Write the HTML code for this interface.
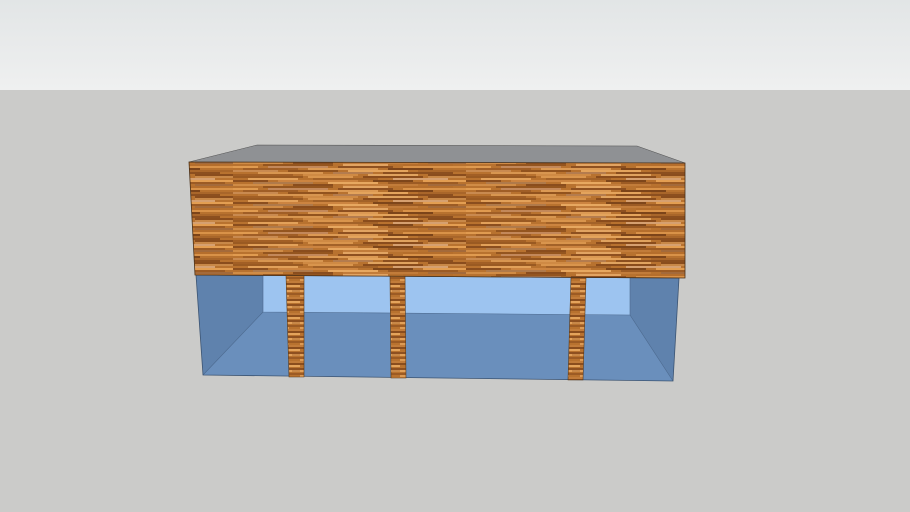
<!DOCTYPE html>
<html><head><meta charset="utf-8"><style>html,body{margin:0;padding:0;width:910px;height:512px;overflow:hidden;background:#cbcbc9}</style></head>
<body>
<svg width="910" height="512" viewBox="0 0 910 512" xmlns="http://www.w3.org/2000/svg">
<defs>
<linearGradient id="sky" x1="0" y1="0" x2="0" y2="1">
<stop offset="0" stop-color="#e2e5e6"/><stop offset="1" stop-color="#eff0f0"/>
</linearGradient>
<pattern id="wood" patternUnits="userSpaceOnUse" width="233" height="22">
<rect width="233" height="22" fill="#b8722f"/>
<rect x="0" y="0" width="70" height="2" fill="#9a5a22"/><rect x="75" y="0" width="45" height="2" fill="#d9954d"/><rect x="130" y="0" width="60" height="2" fill="#8a4c1c"/><rect x="195" y="0" width="38" height="2" fill="#c88848"/>
<rect x="15" y="2" width="50" height="2" fill="#e2a15a"/><rect x="80" y="2" width="65" height="2" fill="#a36228"/><rect x="160" y="2" width="55" height="2" fill="#d6a070"/>
<rect x="0" y="4" width="35" height="2" fill="#8b4e1e"/><rect x="45" y="4" width="80" height="2" fill="#cc8440"/><rect x="140" y="4" width="40" height="2" fill="#7e461a"/><rect x="190" y="4" width="43" height="2" fill="#e39e52"/>
<rect x="20" y="6" width="60" height="2" fill="#b07a4a"/><rect x="95" y="6" width="50" height="2" fill="#e7a860"/><rect x="155" y="6" width="70" height="2" fill="#9c5b24"/>
<rect x="0" y="8" width="50" height="2" fill="#d08c46"/><rect x="60" y="8" width="40" height="2" fill="#8a4d1d"/><rect x="110" y="8" width="75" height="2" fill="#c27c3a"/><rect x="195" y="8" width="38" height="2" fill="#a46a3a"/>
<rect x="30" y="10" width="70" height="2" fill="#94551f"/><rect x="110" y="10" width="45" height="2" fill="#e2a462"/><rect x="170" y="10" width="50" height="2" fill="#b56e2c"/>
<rect x="0" y="12" width="25" height="2" fill="#e09b50"/><rect x="35" y="12" width="60" height="2" fill="#c3885a"/><rect x="105" y="12" width="55" height="2" fill="#8e5020"/><rect x="170" y="12" width="63" height="2" fill="#d99248"/>
<rect x="10" y="14" width="55" height="2" fill="#a05e26"/><rect x="75" y="14" width="70" height="2" fill="#dc9a54"/><rect x="155" y="14" width="45" height="2" fill="#7c4419"/>
<rect x="0" y="16" width="45" height="2" fill="#c98a50"/><rect x="55" y="16" width="50" height="2" fill="#92531e"/><rect x="115" y="16" width="60" height="2" fill="#e4a45c"/><rect x="185" y="16" width="48" height="2" fill="#a9662a"/>
<rect x="25" y="18" width="65" height="2" fill="#d89650"/><rect x="100" y="18" width="40" height="2" fill="#b47c4e"/><rect x="150" y="18" width="70" height="2" fill="#8c4f1f"/>
<rect x="0" y="20" width="60" height="2" fill="#a25f25"/><rect x="70" y="20" width="55" height="2" fill="#cf8a44"/><rect x="135" y="20" width="50" height="2" fill="#e0a35f"/><rect x="195" y="20" width="38" height="2" fill="#8a4d1d"/>
</pattern>
<pattern id="wood2" patternUnits="userSpaceOnUse" width="20" height="16">
<rect width="20" height="16" fill="#b8722f"/>
<rect y="0" width="20" height="2" fill="#8e5020"/><rect y="2" width="12" height="2" fill="#e2a15a"/><rect x="12" y="2" width="8" height="2" fill="#c88848"/>
<rect y="5" width="20" height="2" fill="#9c5b24"/><rect y="7" width="9" height="2" fill="#dc9a54"/><rect y="9" width="20" height="2" fill="#c27c3a"/>
<rect y="11" width="20" height="2" fill="#8a4d1d"/><rect x="6" y="13" width="14" height="2" fill="#e4a45c"/>
</pattern>
</defs>
<rect x="0" y="0" width="910" height="90" fill="url(#sky)"/>
<rect x="0" y="90" width="910" height="422" fill="#cbcbc9"/>
<polygon points="196,275 679,278 673,381 203,375" fill="#6a8fbc"/>
<polygon points="263,275 630,277 630,315 263,312" fill="#9dc4f0"/>
<polygon points="196,275 263,275 263,312 203,375" fill="#5f82ad"/>
<polygon points="630,277 679,278 673,381 630,315" fill="#5f82ad"/>
<polyline points="263,275 263,312 630,315 630,277" fill="none" stroke="#4d6a8f" stroke-width="0.6"/>
<line x1="263" y1="312" x2="203" y2="375" stroke="#4d6a8f" stroke-width="0.6"/>
<line x1="630" y1="315" x2="673" y2="381" stroke="#4d6a8f" stroke-width="0.6"/>
<polygon points="196,275 679,278 673,381 203,375" fill="none" stroke="#3c5472" stroke-width="0.8"/>
<polygon points="286,275 304,275 304,377 289,377" fill="url(#wood2)" stroke="#5a3a1a" stroke-width="0.6"/>
<polygon points="390,276 405,276 406,378 391,378" fill="url(#wood2)" stroke="#5a3a1a" stroke-width="0.6"/>
<polygon points="571,277 586,277 583,380 568,380" fill="url(#wood2)" stroke="#5a3a1a" stroke-width="0.6"/>
<polygon points="189,162 257,145 637,146 685,163" fill="#8f9194" stroke="#555" stroke-width="0.6"/>
<polygon points="189,162 685,163 685,278 195,275" fill="url(#wood)" stroke="#4a3018" stroke-width="0.8"/>
</svg>
</body></html>
